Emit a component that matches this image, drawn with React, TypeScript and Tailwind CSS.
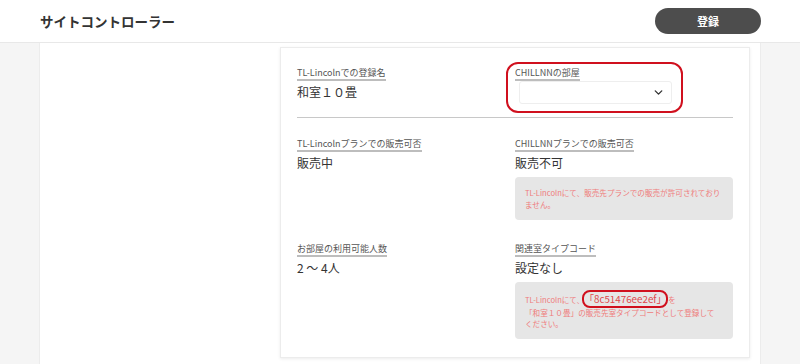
import { ChevronDown } from "lucide-react"

const FONT = { fontFamily: '"Noto Sans CJK JP", "Noto Sans", sans-serif' }

function Label({ children }: { children: React.ReactNode }) {
  return (
    <div className="flex">
      <span className="block text-[9px] leading-[12px] text-[#555] border-b-2 border-[#bdbdbd]">{children}</span>
    </div>
  )
}

function Value({ children }: { children: React.ReactNode }) {
  return <div className="mt-[2px] text-[12px] leading-[18px] text-[#333]">{children}</div>
}

export default function App() {
  return (
    <div className="h-screen overflow-hidden flex flex-col bg-[#f5f5f5]" style={FONT}>
      <header className="h-[43px] shrink-0 bg-white border-b border-[#e8e8e8] flex items-center justify-between pl-[40px] pr-[39px]">
        <h1 className="text-[13.5px] font-bold text-[#333]">サイトコントローラー</h1>
        <button className="w-[106px] h-[26px] rounded-full bg-[#4d4d4d] text-white text-[11px] font-bold">
          登録
        </button>
      </header>

      <main className="flex-1 flex">
        <div className="flex-1 mx-[39px] bg-white border-x border-[#ececec] flex justify-end pr-[10px] pt-[4px]">
          <div className="w-[470px] self-start bg-white border border-[#ececec] shadow-[0_1px_3px_rgba(0,0,0,0.08)] px-4 pt-[19px] pb-[18px]">
            <div className="grid grid-cols-2">
              <div>
                <Label>TL-Lincolnでの登録名</Label>
                <Value>和室１０畳</Value>
              </div>
              <div className="relative">
                <Label>CHILLNNの部屋</Label>
                <div className="ml-[4px] w-[153px] h-[23px] border border-[#eee] rounded-[3px] flex items-center justify-end pr-[6px]">
                  <ChevronDown size={13} strokeWidth={2.5} color="#333" />
                </div>
                <div className="absolute left-[-9px] top-[-5px] w-[177px] h-[51px] rounded-[12px] border-2 border-[#d0101e]" />
              </div>
            </div>

            <div className="mt-[13px] h-px bg-[#c8c8c8]" />

            <div className="grid grid-cols-2 mt-[20px]">
              <div>
                <Label>TL-Lincolnプランでの販売可否</Label>
                <Value>販売中</Value>
              </div>
              <div>
                <Label>CHILLNNプランでの販売可否</Label>
                <Value>販売不可</Value>
                <div className="mt-[5px] rounded-[4px] bg-[#e6e6e6] px-[10px] py-[10px] text-[7.6px] leading-[11.5px] text-[#ef7b7b]">
                  TL-Lincolnにて、販売先プランでの販売が許可されており
                  <br />
                  ません。
                </div>
              </div>
            </div>

            <div className="grid grid-cols-2 mt-[23px]">
              <div>
                <Label>お部屋の利用可能人数</Label>
                <Value>2 〜 4人</Value>
              </div>
              <div>
                <Label>関連室タイプコード</Label>
                <Value>設定なし</Value>
                <div className="mt-[5px] rounded-[4px] bg-[#e6e6e6] px-[10px] py-[10px] text-[7.6px] leading-[11px] text-[#ef7b7b]">
                  <div className="flex items-center h-[15px]">
                    <span>TL-Lincolnにて、</span>
                    <span className="relative text-[9.8px] text-[#e0474c]">
                      「8c51476ee2ef」
                      <span className="absolute left-[-2px] right-[-2px] top-[-4px] bottom-[-3px] rounded-[8px] border-2 border-[#d0101e]" />
                    </span>
                    <span className="ml-[2px]">を</span>
                  </div>
                  <div>「和室１０畳」の販売先室タイプコードとして登録して</div>
                  <div>ください。</div>
                </div>
              </div>
            </div>
          </div>
        </div>
      </main>
    </div>
  )
}
